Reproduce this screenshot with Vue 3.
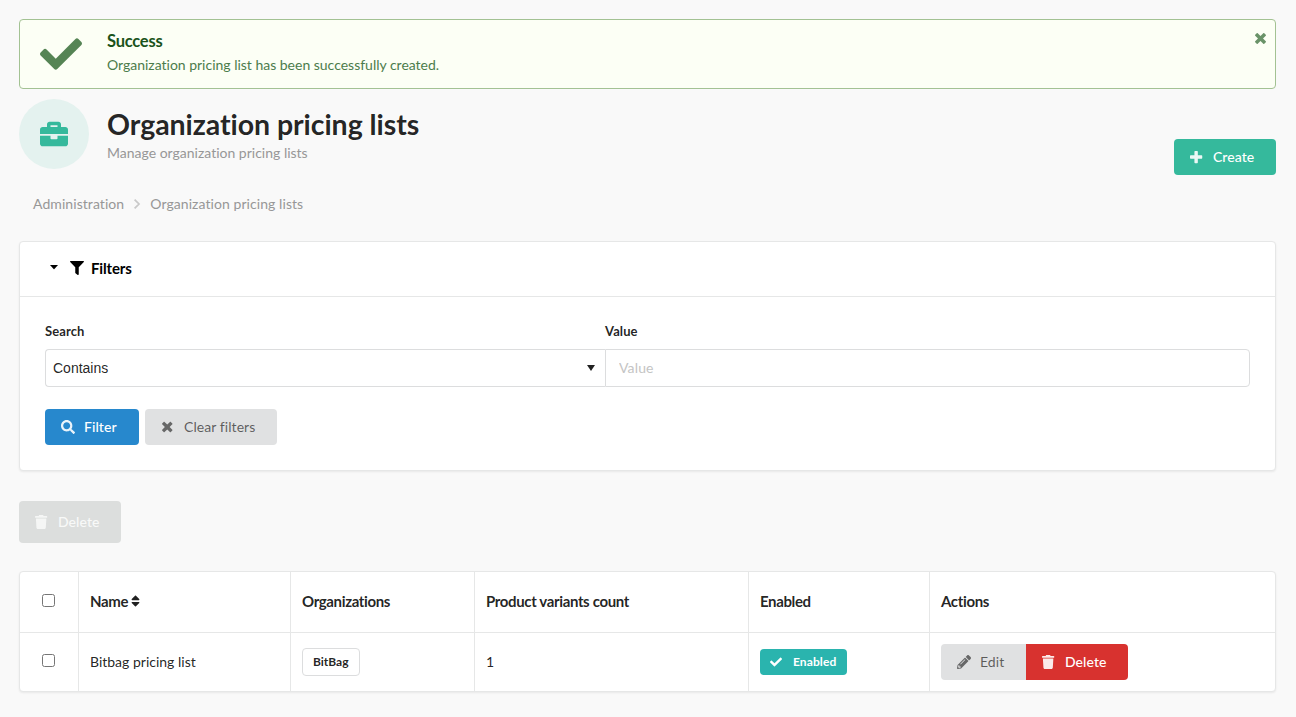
<script setup>
const icons = {
  check: { box: '0 0 512 512', d: 'M173.898 439.404l-166.4-166.4c-9.997-9.997-9.997-26.206 0-36.204l36.203-36.204c9.997-9.998 26.207-9.998 36.204 0L192 312.69 432.095 72.596c9.997-9.997 26.207-9.997 36.204 0l36.203 36.204c9.997 9.997 9.997 26.206 0 36.204l-294.4 294.401c-9.998 9.997-26.207 9.997-36.204-.001z' },
  times: { box: '0 0 384 512', d: 'M323.1 441l53.9-53.9c9.4-9.4 9.4-24.5 0-33.9L279.8 256l97.2-97.2c9.4-9.4 9.4-24.5 0-33.9L323.1 71c-9.4-9.4-24.5-9.4-33.9 0L192 168.2 94.8 71c-9.4-9.4-24.5-9.4-33.9 0L7 124.9c-9.4 9.4-9.4 24.5 0 33.9l97.2 97.2L7 353.2c-9.4 9.4-9.4 24.5 0 33.9L60.9 441c9.4 9.4 24.5 9.4 33.9 0l97.2-97.2 97.2 97.2c9.3 9.3 24.5 9.3 33.9 0z' },
  plus: { box: '0 0 448 512', d: 'M448 294.2v-76.4c0-13.3-10.7-24-24-24H286.2V56c0-13.3-10.7-24-24-24h-76.4c-13.3 0-24 10.7-24 24v137.8H24c-13.3 0-24 10.7-24 24v76.4c0 13.3 10.7 24 24 24h137.8V456c0 13.3 10.7 24 24 24h76.4c13.3 0 24-10.7 24-24V318.2H424c13.3 0 24-10.7 24-24z' },
  briefcase: { box: '0 0 512 512', d: 'M320 336c0 8.84-7.16 16-16 16h-96c-8.84 0-16-7.16-16-16v-48H0v144c0 25.6 22.4 48 48 48h416c25.6 0 48-22.4 48-48V288H320v48zm144-208h-80V80c0-25.6-22.4-48-48-48H176c-25.6 0-48 22.4-48 48v48H48c-25.6 0-48 22.4-48 48v80h512v-80c0-25.6-22.4-48-48-48zm-144 0H192V96h128v32z' },
  filter: { box: '0 0 512 512', d: 'M487.976 0H24.028C2.71 0-8.047 25.866 7.058 40.971L192 225.941V432c0 7.831 3.821 15.17 10.237 19.662l80 55.98C298.02 518.69 320 507.493 320 487.98V225.941l184.947-184.97C520.021 25.896 509.338 0 487.976 0z' },
  search: { box: '0 0 512 512', d: 'M505 442.7L405.3 343c-4.5-4.5-10.6-7-17-7H372c27.6-35.3 44-79.7 44-128C416 93.1 322.9 0 208 0S0 93.1 0 208s93.1 208 208 208c48.3 0 92.7-16.4 128-44v16.3c0 6.4 2.5 12.5 7 17l99.7 99.7c9.4 9.4 24.6 9.4 33.9 0l28.3-28.3c9.4-9.4 9.4-24.6.1-34zM208 336c-70.7 0-128-57.2-128-128 0-70.7 57.2-128 128-128 70.7 0 128 57.2 128 128 0 70.7-57.2 128-128 128z' },
  trash: { box: '0 0 448 512', d: 'M0 84V56c0-13.3 10.7-24 24-24h112l9.4-18.7c4-8.2 12.3-13.3 21.4-13.3h114.3c9.1 0 17.4 5.1 21.5 13.3L312 32h112c13.3 0 24 10.7 24 24v28c0 6.6-5.4 12-12 12H12C5.4 96 0 90.6 0 84zm415.2 56.7L394.8 467c-1.6 25.3-22.6 45-47.9 45H101.1c-25.3 0-46.3-19.7-47.9-45L32.8 140.7c-.4-6.9 5.1-12.7 12-12.7h358.5c6.8 0 12.3 5.8 11.9 12.7z' },
  pencil: { box: '0 0 512 512', d: 'M497.9 142.1l-46.1 46.1c-4.7 4.7-12.3 4.7-17 0l-111-111c-4.7-4.7-4.7-12.3 0-17l46.1-46.1c18.7-18.7 49.1-18.7 67.9 0l60.1 60.1c18.8 18.7 18.8 49.1 0 67.9zM284.2 99.8L21.6 362.4.4 483.9c-2.9 16.4 11.4 30.6 27.8 27.8l121.5-21.3 262.6-262.6c4.7-4.7 4.7-12.3 0-17l-111-111c-4.8-4.7-12.4-4.7-17.1 0zM124.1 339.9c-5.5-5.5-5.5-14.3 0-19.8l154-154c5.5-5.5 14.3-5.5 19.8 0s5.5 14.3 0 19.8l-154 154c-5.5 5.5-14.3 5.5-19.8 0zM88 424h48v36.3l-64.5 11.3-31.1-31.1L51.7 376H88v48z' },
  sort: { box: '0 0 320 512', d: 'M41 288h238c21.4 0 32.1 25.9 17 41L177 448c-9.4 9.4-24.6 9.4-33.9 0L24 329c-15.1-15.1-4.4-41 17-41zm255-105L177 64c-9.4-9.4-24.6-9.4-33.9 0L24 183c-15.1 15.1-4.4 41 17 41h238c21.4 0 32.1-25.9 17-41z' },
}
</script>

<template>
  <main class="page">
    <section class="message">
      <svg class="message-icon" :viewBox="icons.check.box"><path :d="icons.check.d" /></svg>
      <div class="message-body">
        <div class="message-title">Success</div>
        <p>Organization pricing list has been successfully created.</p>
      </div>
      <svg class="close" :viewBox="icons.times.box"><path :d="icons.times.d" /></svg>
    </section>

    <header class="heading">
      <div class="badge">
        <svg :viewBox="icons.briefcase.box"><path :d="icons.briefcase.d" /></svg>
      </div>
      <div class="titles">
        <h1>Organization pricing lists</h1>
        <div class="subtitle">Manage organization pricing lists</div>
      </div>
      <button class="btn create">
        <span class="ico"><svg :viewBox="icons.plus.box"><path :d="icons.plus.d" /></svg></span>Create
      </button>
    </header>

    <nav class="breadcrumb">
      <span>Administration</span>
      <svg class="chevron" viewBox="0 0 8 12"><path d="M1.6 1.6 6 6 1.6 10.4" /></svg>
      <span>Organization pricing lists</span>
    </nav>

    <section class="panel">
      <div class="panel-title">
        <svg class="caret" viewBox="0 0 8 5"><path d="M0 0h8L4.400 4.100a.6.6 0 0 1-.8 0z" /></svg>
        <svg class="funnel" :viewBox="icons.filter.box"><path :d="icons.filter.d" /></svg>
        <span>Filters</span>
      </div>
      <div class="panel-body">
        <div class="fields">
          <div class="field">
            <label>Search</label>
            <div class="select">
              <span>Contains</span>
              <svg viewBox="0 0 8 6"><path d="M0 0h8L4 6z" /></svg>
            </div>
          </div>
          <div class="field">
            <label>Value</label>
            <input type="text" placeholder="Value">
          </div>
        </div>
        <div class="buttons">
          <button class="btn blue">
            <span class="ico"><svg :viewBox="icons.search.box"><path :d="icons.search.d" /></svg></span>Filter
          </button>
          <button class="btn grey clear">
            <span class="ico"><svg :viewBox="icons.times.box"><path :d="icons.times.d" /></svg></span>Clear filters
          </button>
        </div>
      </div>
    </section>

    <button class="btn bulk">
      <span class="ico"><svg :viewBox="icons.trash.box"><path :d="icons.trash.d" /></svg></span>Delete
    </button>

    <section class="table">
      <div class="row head">
        <div class="cell tick"><input type="checkbox"></div>
        <div class="cell">Name<svg class="sort" :viewBox="icons.sort.box"><path :d="icons.sort.d" /></svg></div>
        <div class="cell">Organizations</div>
        <div class="cell">Product variants count</div>
        <div class="cell">Enabled</div>
        <div class="cell">Actions</div>
      </div>
      <div class="row">
        <div class="cell tick"><input type="checkbox"></div>
        <div class="cell">Bitbag pricing list</div>
        <div class="cell"><span class="tag">BitBag</span></div>
        <div class="cell">1</div>
        <div class="cell">
          <span class="label"><svg :viewBox="icons.check.box"><path :d="icons.check.d" /></svg>Enabled</span>
        </div>
        <div class="cell">
          <button class="btn grey edit">
            <span class="ico"><svg :viewBox="icons.pencil.box"><path :d="icons.pencil.d" /></svg></span>Edit
          </button>
          <button class="btn red">
            <span class="ico"><svg :viewBox="icons.trash.box"><path :d="icons.trash.d" /></svg></span>Delete
          </button>
        </div>
      </div>
    </section>
  </main>
</template>

<style>
body {
  background: #f9f9f9;
}
</style>

<style scoped>
.page {
  box-sizing: border-box;
  height: 717px;
  padding: 19px 20px 0 19px;
  overflow: hidden;
  font: 14px/20px Lato, "Liberation Sans", sans-serif;
  font-variant-ligatures: none;
  color: rgba(0, 0, 0, 0.87);
}
.page * {
  box-sizing: border-box;
}
svg {
  display: block;
  flex: none;
  fill: currentColor;
}
.message {
  display: flex;
  height: 70px;
  border: 1px solid #a3c293;
  border-radius: 4px;
  background: #fcfff5;
  color: #2c662d;
}
.message-icon {
  width: 42px;
  height: 42px;
  margin: 13px 25px 0 20px;
  opacity: 0.8;
}
.message-body {
  flex: 1;
  padding-top: 11px;
}
.message-title {
  font-size: 16.5px;
  letter-spacing: -0.25px;
  font-weight: 700;
  color: #1a531b;
}
.message p {
  margin: 4px 0 0;
  letter-spacing: -0.01px;
  opacity: 0.85;
}
.close {
  width: 11px;
  height: 15px;
  margin: 11px 9px 0 0;
  opacity: 0.7;
}
.heading {
  display: flex;
  height: 76px;
  margin-top: 10px;
}
.badge {
  display: flex;
  align-items: center;
  justify-content: center;
  width: 70px;
  height: 70px;
  border-radius: 50%;
  background: #e4f2ef;
  color: #35b99c;
}
.badge svg {
  width: 28px;
  height: 28px;
  margin-bottom: 1px;
}
.titles {
  flex: 1;
  padding: 7px 0 0 18px;
}
h1 {
  margin: 0;
  font-size: 28.5px;
  line-height: 37px;
  letter-spacing: -0.06px;
  font-weight: 700;
}
.subtitle {
  color: #979797;
}
.btn {
  display: flex;
  align-items: center;
  flex: none;
  width: 102px;
  height: 36px;
  padding: 0 0 0 14px;
  border: 0;
  border-radius: 4px;
  font: 500 14px/14px Lato, "Liberation Sans", sans-serif;
  letter-spacing: 0.07px;
  color: #fff;
}
.ico {
  display: flex;
  justify-content: center;
  width: 17px;
  margin-right: 8px;
  opacity: 0.9;
}
.ico svg {
  height: 14px;
}
.create {
  align-self: flex-end;
  background: #35b99c;
}
.blue {
  width: 94px;
  background: #2788cd;
}
.grey {
  background: #e0e1e2;
  color: rgba(0, 0, 0, 0.6);
  font-weight: 400;
}
.clear {
  width: 132px;
}
.red {
  border-radius: 0 4px 4px 0;
  background: #d8322f;
}
.edit {
  width: 85px;
  border-radius: 4px 0 0 4px;
}
.bulk {
  height: 42px;
  margin-top: 30px;
  background: #dcdedd;
  color: #f8f9f8;
}
.breadcrumb {
  display: flex;
  align-items: center;
  margin-top: 19px;
  padding-left: 14px;
  letter-spacing: 0.07px;
  color: #979797;
}
.chevron {
  width: 8px;
  height: 12px;
  margin: 0 9px;
  fill: none;
  stroke: #c9c9c9;
  stroke-width: 1.7;
}
.panel {
  height: 230px;
  margin-top: 27px;
  border: 1px solid #e6e7e7;
  border-radius: 4px;
  background: #fff;
  box-shadow: 0 1px 2px rgba(34, 36, 38, 0.08);
}
.panel-title {
  display: flex;
  align-items: center;
  height: 55px;
  padding: 0 0 2px 30px;
  border-bottom: 1px solid #e6e7e7;
  font-size: 15px;
  font-weight: 700;
  letter-spacing: -0.15px;
  color: #000;
}
.caret {
  width: 8px;
  height: 5px;
  margin: 0 12px 1px 0;
}
.funnel {
  width: 14px;
  height: 14px;
  margin-right: 7px;
}
.panel-body {
  padding: 24px 25px 0;
}
.fields {
  display: grid;
  grid-template-columns: 560px 1fr;
}
label {
  display: block;
  font-size: 13px;
  font-weight: 700;
  letter-spacing: 0.1px;
  margin-bottom: 8px;
}
.select,
.field input {
  display: flex;
  align-items: center;
  width: 100%;
  height: 38px;
  border: 1px solid #dcddde;
  border-radius: 4px 0 0 4px;
  background: #fff;
}
.select {
  justify-content: space-between;
  padding: 0 10px 0 7px;
  border-right: 0;
  font: 14px "Liberation Sans", sans-serif;
}
.select svg {
  width: 8px;
  height: 6px;
}
.field input {
  padding: 0 14px 2px 13px;
  border-radius: 0 4px 4px 0;
  font: 14px Lato, "Liberation Sans", sans-serif;
  letter-spacing: 0.15px;
}
.field input::placeholder {
  color: #c4c4c4;
}
.buttons {
  display: flex;
  gap: 6px;
  margin-top: 22px;
}
.table {
  margin-top: 28px;
  border: 1px solid #e6e7e7;
  border-radius: 4px;
  background: #fff;
  box-shadow: 0 1px 2px rgba(34, 36, 38, 0.08);
}
.row {
  display: grid;
  grid-template-columns: 59px 212px 184px 274px 181px 1fr;
  height: 58px;
}
.head {
  height: 61px;
  border-bottom: 1px solid #e6e7e7;
  font-size: 15px;
  font-weight: 700;
  letter-spacing: -0.36px;
}
.cell {
  display: flex;
  align-items: center;
  padding-left: 11px;
  border-right: 1px solid #e6e7e7;
}
.head .cell:not(.tick) {
  padding-bottom: 2px;
}
.cell:last-child {
  border-right: 0;
}
.tick {
  padding: 0 0 3px 22px;
}
.tick input {
  width: 13px;
  height: 13px;
  margin: 0;
}
.sort {
  width: 9px;
  height: 14px;
  margin-left: 3px;
}
.tag {
  padding: 0 10px;
  border: 1px solid #dcddde;
  border-radius: 4px;
  font-size: 12px;
  font-weight: 700;
  line-height: 26px;
}
.label {
  display: flex;
  align-items: center;
  width: 87px;
  height: 26px;
  padding-left: 10px;
  border-radius: 4px;
  background: #2ab4ae;
  color: #fff;
  font-size: 12px;
  font-weight: 700;
  letter-spacing: 0.1px;
}
.label svg {
  width: 12px;
  height: 12px;
  margin-right: 11px;
}
</style>
